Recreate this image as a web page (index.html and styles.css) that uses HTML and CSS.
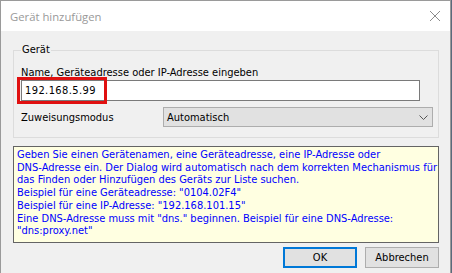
FILE: index.html
```html
<!DOCTYPE html>
<html lang="de">
<head>
    <meta charset="UTF-8">
    <title>Gerät hinzufügen</title>
    <link rel="stylesheet" href="styles.css">
</head>
<body>
    <div class="window">
        <div class="titlebar">
            <span class="title">Gerät hinzufügen</span>
            <svg class="close" width="12" height="12" viewBox="0 0 12 12">
                <path d="M1 1 L11 11 M11 1 L1 11" stroke="#8c8c8c" stroke-width="1" fill="none"/>
            </svg>
        </div>
        <div class="content">
            <fieldset class="group">
                <legend>Gerät</legend>
                <div class="label">Name, Geräteadresse oder IP-Adresse eingeben</div>
                <div class="input-wrap">
                    <input class="input" type="text" value="192.168.5.99">
                    <div class="highlight"></div>
                </div>
                <div class="row">
                    <span class="row-label">Zuweisungsmodus</span>
                    <div class="select">
                        <span>Automatisch</span>
                        <svg width="9" height="5" viewBox="0 0 9 5">
                            <path d="M0.5 0.5 L4.5 4.5 L8.5 0.5" stroke="#555" stroke-width="1" fill="none"/>
                        </svg>
                    </div>
                </div>
            </fieldset>
            <div class="info">
                Geben Sie einen Gerätenamen, eine Geräteadresse, eine IP-Adresse oder<br>
                DNS-Adresse ein. Der Dialog wird automatisch nach dem korrekten Mechanismus für<br>
                das Finden oder Hinzufügen des Geräts zur Liste suchen.<br>
                Beispiel für eine Geräteadresse: "0104.02F4"<br>
                Beispiel für eine IP-Adresse: "192.168.101.15"<br>
                Eine DNS-Adresse muss mit "dns." beginnen. Beispiel für eine DNS-Adresse:<br>
                "dns:proxy.net"
            </div>
            <div class="buttons">
                <button class="btn btn-default">OK</button>
                <button class="btn">Abbrechen</button>
            </div>
        </div>
    </div>
</body>
</html>
```

FILE: styles.css
```css
body {
    margin: 0;
    background-color: #5a6a7c;
    font-family: 'DejaVu Sans Condensed', 'DejaVu Sans', sans-serif;
    font-size: 11px;
    color: #000;
}

.window {
    width: 449px;
    height: 272px;
    border: 1px solid #9a9a9a;
    border-bottom: none;
    background-color: #f0f0f0;
}

.titlebar {
    height: 30px;
    background-color: #fff;
    display: flex;
    align-items: center;
    justify-content: space-between;
    padding: 0 9px 0 9px;
}

.title {
    font-family: 'Open Sans', sans-serif;
    font-size: 11.3px;
    color: #999;
}

.content {
    padding: 0 11px 0 12px;
}

.group {
    margin: 12px 0 0 0;
    padding: 0 5px 10px 7px;
    border: 1px solid #dcdcdc;
}

.group legend {
    padding: 0 1px;
    line-height: 14px;
}

.label {
    margin-top: 9px;
    line-height: 13px;
}

.input-wrap {
    position: relative;
    margin-top: 1px;
    width: 399px;
    height: 21px;
}

.input {
    box-sizing: border-box;
    display: block;
    width: 399px;
    height: 21px;
    border: 1px solid #7a7a7a;
    background-color: #fff;
    font-family: 'DejaVu Sans Condensed', 'DejaVu Sans', sans-serif;
    font-size: 11px;
    letter-spacing: 0.4px;
    padding: 0 3px;
    margin: 0;
    outline: none;
}

.highlight {
    position: absolute;
    left: -4px;
    top: -3px;
    width: 84px;
    height: 21px;
    border: 3px solid #e01010;
}

.row {
    display: flex;
    align-items: center;
    justify-content: space-between;
    margin-top: 6px;
}

.select {
    box-sizing: border-box;
    width: 270px;
    height: 20px;
    background-color: #e1e1e1;
    border: 1px solid #adadad;
    display: flex;
    align-items: center;
    justify-content: space-between;
    padding: 0 4px 0 3px;
}

.info {
    box-sizing: border-box;
    margin-top: 8px;
    height: 97px;
    border: 1px solid #646464;
    background-color: #ffffe1;
    color: #0000ff;
    padding: 2px 3px 0 3px;
    line-height: 12.7px;
    white-space: nowrap;
}

.buttons {
    display: flex;
    justify-content: flex-end;
    gap: 8px;
    margin-top: 4px;
}

.btn {
    box-sizing: border-box;
    width: 74px;
    height: 21px;
    background-color: #e1e1e1;
    border: 1px solid #adadad;
    font-family: 'DejaVu Sans Condensed', 'DejaVu Sans', sans-serif;
    font-size: 11px;
    color: #000;
    padding: 0;
}

.btn-default {
    border: 2px solid #0078d7;
}
```
